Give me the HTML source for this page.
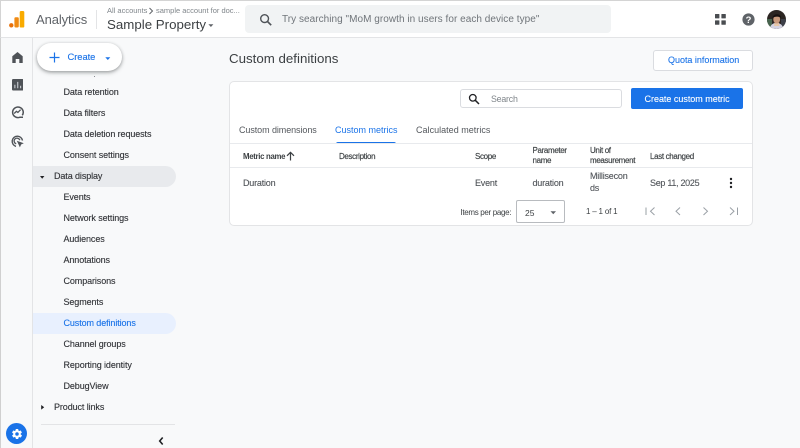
<!DOCTYPE html>
<html><head><meta charset="utf-8">
<style>
html,body{margin:0;padding:0;width:800px;height:448px;overflow:hidden;background:#f8f9fa;font-family:"Liberation Sans",sans-serif;}
.t{position:absolute;white-space:nowrap;line-height:12px;}
.b{position:absolute;box-sizing:border-box;}
.n{font-size:9px;color:#303236;left:63.5px;letter-spacing:-.1px;-webkit-text-stroke:.12px #303236;}
.h{font-size:8px;color:#3c4043;letter-spacing:-.35px;-webkit-text-stroke:.15px #3c4043;}
.r{font-size:9px;color:#4f5358;letter-spacing:-.2px;-webkit-text-stroke:.1px #4f5358;}
svg{position:absolute;}
</style></head><body>
<div class="b" style="left:0;top:0;width:800px;height:38px;background:#fff;border-bottom:1px solid #e3e4e6;border-top:1px solid #d4d4d4;border-left:1px solid #d4d4d4"></div>
<div class="b" style="left:0;top:38px;width:33px;height:410px;background:#f8f9fa;border-right:1px solid #e3e4e6;border-left:1px solid #d0d0d0"></div>

<!-- logo -->
<svg style="left:9px;top:10px" width="16" height="18" viewBox="0 0 16 18"><circle cx="2.300" cy="15.300" r="2.200" fill="#e8710a"/><rect x="5.400" y="7.200" width="4.400" height="10.300" rx="1.200" fill="#f08a12"/><rect x="10.700" y="1" width="4.600" height="16.500" rx="1.300" fill="#f9ab00"/></svg>
<div class="t" style="left:36px;top:12px;font-size:13px;line-height:15px;color:#5f6368;letter-spacing:-.1px">Analytics</div>
<div class="b" style="left:96px;top:10px;width:1px;height:19px;background:#e3e4e6"></div>
<div class="t" style="left:107px;top:5px;font-size:7.500px;line-height:11px;color:#80868b">All accounts</div>
<svg style="left:148px;top:7px" width="6" height="8" viewBox="0 0 6 8"><path d="M1.500 1l3 3-3 3" fill="none" stroke="#5f6368" stroke-width="1"/></svg>
<div class="t" style="left:156px;top:5px;font-size:7.500px;line-height:11px;color:#80868b">sample account for doc...</div>
<div class="t" style="left:107px;top:15.500px;font-size:13.300px;line-height:17px;color:#3c4043">Sample Property</div>
<svg style="left:207.500px;top:23.500px" width="6" height="4" viewBox="0 0 6 4"><path d="M.4 .3h5L2.900 3z" fill="#5f6368"/></svg>

<!-- search -->
<div class="b" style="left:245px;top:5px;width:366px;height:28px;background:#f1f3f4;border-radius:4px"></div>
<svg style="left:258.500px;top:13px" width="14" height="14" viewBox="0 0 14 14"><circle cx="5.600" cy="5.600" r="3.900" fill="none" stroke="#4f5358" stroke-width="1.400"/><path d="M8.500 8.500l3.700 3.700" stroke="#4f5358" stroke-width="1.600"/></svg>
<div class="t" style="left:282px;top:13.500px;font-size:10px;color:#70757a;letter-spacing:.04px">Try searching "MoM growth in users for each device type"</div>

<!-- top right -->
<svg style="left:715px;top:14px" width="11" height="11" viewBox="0 0 11 11"><g fill="#4a4d51"><rect width="4.400" height="4.400" rx=".4"/><rect x="6.400" width="4.400" height="4.400" rx=".4"/><rect y="6.400" width="4.400" height="4.400" rx=".4"/><rect x="6.400" y="6.400" width="4.400" height="4.400" rx=".4"/></g></svg>
<svg style="left:742px;top:13px" width="13" height="13" viewBox="0 0 13 13"><circle cx="6.500" cy="6.500" r="6.100" fill="#5f6368"/><text x="6.500" y="10" font-size="9.500" font-weight="bold" text-anchor="middle" fill="#fff" font-family="Liberation Sans">?</text></svg>
<svg style="left:767px;top:9.500px" width="19" height="19" viewBox="0 0 19 19"><defs><clipPath id="c"><circle cx="9.500" cy="9.500" r="9.500"/></clipPath></defs><g clip-path="url(#c)"><rect width="19" height="19" fill="#2b2522"/><rect x="0" y="9" width="5" height="10" fill="#47644e"/><rect x="14" y="9" width="5" height="10" fill="#3c3f48"/><path d="M3 19c.3-4.500 3-6 6.500-6s6.200 1.500 6.500 6z" fill="#d4d3e2"/><ellipse cx="9.700" cy="9.300" rx="3.400" ry="4.300" fill="#c99a7c"/><path d="M5.500 8.500C5 3.500 14 2.500 14 8c-1.500-1.700-6.500-2-8.500.5z" fill="#171110"/><path d="M7.500 12.800c1 1.300 3.400 1.300 4.400 0l.6 3.200H7z" fill="#e7c8a8"/></g></svg>

<!-- rail icons -->
<svg style="left:11.500px;top:51.500px" width="11" height="11" viewBox="0 0 11 11"><path d="M5.500 0L.3 4.200V11h3.400V7h3.600v4h3.400V4.200z" fill="#4f5358"/></svg>
<svg style="left:11.500px;top:79px" width="11.500" height="11.500" viewBox="0 0 12 12"><rect width="12" height="12" rx="1.200" fill="#4f5358"/><path d="M3 6v3.600M6 3v6.600M9 7v2.600" stroke="#cfd3d8" stroke-width="1.100"/></svg>
<svg style="left:10.500px;top:106px" width="13" height="13" viewBox="0 0 13 13"><path d="M11.300 9.300A5.300 5.300 0 1 0 8.700 11.300H12" fill="none" stroke="#4f5358" stroke-width="1.500"/><path d="M3.200 7.500l2.200-2.200 1.500 1.100 2.700-2.700" fill="none" stroke="#4f5358" stroke-width="1.300"/></svg>
<svg style="left:10.500px;top:134.500px" width="13" height="13" viewBox="0 0 13 13"><path d="M5 11.400A5.200 5.200 0 1 1 11.500 5.500" fill="none" stroke="#4f5358" stroke-width="1.400"/><path d="M5.200 8.800A2.900 2.900 0 1 1 8.800 5.200" fill="none" stroke="#4f5358" stroke-width="1.300"/><path d="M5.800 5.800l7 2.500-2.700 1.200-1.200 2.900z" fill="#4f5358"/></svg>

<!-- nav highlights -->
<div class="b" style="left:33px;top:166px;width:143px;height:21px;background:#e8eaed;border-radius:0 11px 11px 0"></div>
<div class="b" style="left:33px;top:312.500px;width:143px;height:21px;background:#e8f0fe;border-radius:0 11px 11px 0"></div>

<!-- nav -->
<div class="b" style="left:93.500px;top:75.500px;width:1px;height:1px;background:#8a8d91"></div>
<div class="t n" style="top:86px">Data retention</div>
<div class="t n" style="top:107px">Data filters</div>
<div class="t n" style="top:128px">Data deletion requests</div>
<div class="t n" style="top:149px">Consent settings</div>
<svg style="left:40px;top:175.500px" width="5" height="3" viewBox="0 0 5 3"><path d="M0 0h4.400L2.200 2.700z" fill="#202124"/></svg>
<div class="t n" style="top:170px;left:54px">Data display</div>
<div class="t n" style="top:191px">Events</div>
<div class="t n" style="top:212px">Network settings</div>
<div class="t n" style="top:233px">Audiences</div>
<div class="t n" style="top:254px">Annotations</div>
<div class="t n" style="top:275px">Comparisons</div>
<div class="t n" style="top:296px">Segments</div>
<div class="t n" style="top:317px;color:#1a73e8;-webkit-text-stroke:.12px #1a73e8">Custom definitions</div>
<div class="t n" style="top:338px">Channel groups</div>
<div class="t n" style="top:359px">Reporting identity</div>
<div class="t n" style="top:380px">DebugView</div>
<svg style="left:40.500px;top:404.500px" width="4" height="5" viewBox="0 0 4 5"><path d="M.2 0v4.600L3.200 2.300z" fill="#202124"/></svg>
<div class="t n" style="top:401px;left:54px">Product links</div>
<div class="b" style="left:41px;top:424px;width:134px;height:1px;background:#e3e4e6"></div>
<svg style="left:158px;top:436px" width="7" height="10" viewBox="0 0 7 10"><path d="M4.700 1.500L1.700 5l3 3.500" fill="none" stroke="#202124" stroke-width="1.600"/></svg>

<!-- settings -->
<div class="b" style="left:6px;top:423px;width:21px;height:21px;border-radius:50%;background:#1a73e8"></div>
<svg style="left:10.500px;top:427.500px" width="12" height="12" viewBox="0 0 24 24"><path fill="#fff" fill-rule="evenodd" d="M19.400 13c.1-.3.1-.7.1-1s0-.7-.1-1l2.100-1.600c.2-.2.2-.4.1-.6l-2-3.500c-.1-.2-.4-.3-.6-.2l-2.500 1c-.5-.4-1.100-.7-1.700-1L14.400 2.400C14.400 2.200 14.200 2 14 2h-4c-.2 0-.4.200-.5.400L9.100 5.100c-.6.300-1.200.6-1.700 1l-2.500-1c-.2-.1-.5 0-.6.200l-2 3.500c-.1.200-.1.400.1.600L4.600 11c0 .3-.1.700-.1 1s0 .7.100 1l-2.100 1.600c-.2.200-.2.400-.1.600l2 3.500c.1.200.4.300.6.200l2.500-1c.5.400 1.100.7 1.700 1l.4 2.700c0 .2.200.4.500.4h4c.2 0 .4-.2.500-.4l.4-2.700c.6-.3 1.200-.6 1.700-1l2.500 1c.2.100.5 0 .6-.2l2-3.500c.1-.2.1-.4-.1-.6zM12 15.500a3.500 3.500 0 1 1 0-7 3.500 3.500 0 0 1 0 7z"/></svg>

<!-- create button -->
<div class="b" style="left:37px;top:42.500px;width:85px;height:28px;background:#fff;border-radius:14px;box-shadow:0 1px 3px rgba(60,64,67,.4),0 2px 5px rgba(60,64,67,.2)"></div>
<svg style="left:48.500px;top:52px" width="11" height="11" viewBox="0 0 11 11"><path d="M5.500 .5v10M.5 5.500h10" stroke="#1a73e8" stroke-width="1.200"/></svg>
<div class="t" style="left:67.500px;top:50.500px;font-size:9.400px;color:#1a73e8;-webkit-text-stroke:.12px #1a73e8;letter-spacing:-.05px">Create</div>
<svg style="left:105px;top:56.500px" width="6" height="4" viewBox="0 0 6 4"><path d="M.3 .2h5L2.800 3z" fill="#1a73e8"/></svg>

<!-- main -->
<div class="t" style="left:229px;top:50.500px;font-size:13.300px;line-height:16px;color:#3c4043">Custom definitions</div>
<div class="b" style="left:653px;top:49.500px;width:100px;height:21px;background:#fff;border:1px solid #dadce0;border-radius:3px"></div>
<div class="t" style="left:668px;top:54px;font-size:9px;color:#1a73e8;letter-spacing:-.02px;-webkit-text-stroke:.1px #1a73e8">Quota information</div>

<div class="b" style="left:229px;top:81px;width:524px;height:145px;background:#fff;border:1px solid #e3e4e6;border-radius:5px"></div>

<!-- search box -->
<div class="b" style="left:460px;top:89px;width:162px;height:19px;background:#fff;border:1px solid #dadce0;border-radius:3px"></div>
<svg style="left:468px;top:92.500px" width="12" height="12" viewBox="0 0 12 12"><circle cx="4.800" cy="4.800" r="3.300" fill="none" stroke="#202124" stroke-width="1.300"/><path d="M7.300 7.300l3.700 3.700" stroke="#202124" stroke-width="1.500"/></svg>
<div class="t" style="left:491px;top:92.500px;font-size:8.800px;color:#80868b;letter-spacing:-.2px">Search</div>
<div class="b" style="left:631px;top:88px;width:112px;height:21px;background:#1a73e8;border-radius:2px"></div>
<div class="t" style="left:644.500px;top:92.500px;font-size:9px;color:#fff;letter-spacing:-.02px;-webkit-text-stroke:.1px #fff">Create custom metric</div>

<!-- tabs -->
<div class="t" style="left:239px;top:124px;font-size:9px;color:#54585d;letter-spacing:-.08px">Custom dimensions</div>
<div class="t" style="left:335px;top:124px;font-size:9px;color:#1a73e8;letter-spacing:0">Custom metrics</div>
<div class="t" style="left:416px;top:124px;font-size:9px;color:#54585d;letter-spacing:.02px">Calculated metrics</div>
<div class="b" style="left:336px;top:142px;width:60px;height:2px;background:#1a73e8;border-radius:2px 2px 0 0"></div>
<div class="b" style="left:230px;top:143px;width:522px;height:1px;background:#e8eaed"></div>

<!-- table head -->
<div class="t h" style="left:243px;top:150.500px;font-weight:bold;font-size:7.800px;letter-spacing:-.3px;-webkit-text-stroke:0">Metric name</div>
<svg style="left:285.500px;top:151px" width="9" height="10" viewBox="0 0 9 10"><path d="M4.500 9.500V1.500M1 4.800l3.500-3.500 3.500 3.500" fill="none" stroke="#3c4043" stroke-width="1.200"/></svg>
<div class="t h" style="left:339px;top:150.500px">Description</div>
<div class="t h" style="left:475px;top:150.500px">Scope</div>
<div class="t h" style="left:532.500px;top:146px;line-height:9.500px">Parameter<br>name</div>
<div class="t h" style="left:590px;top:146px;line-height:9.500px">Unit of<br>measurement</div>
<div class="t h" style="left:650px;top:150.500px">Last changed</div>
<div class="b" style="left:230px;top:167px;width:522px;height:1px;background:#e8eaed"></div>

<!-- row -->
<div class="t r" style="left:243px;top:177px">Duration</div>
<div class="t r" style="left:475px;top:177px">Event</div>
<div class="t r" style="left:532.500px;top:177px">duration</div>
<div class="t r" style="left:590px;top:171px;line-height:11.500px">Millisecon<br>ds</div>
<div class="t r" style="left:650px;top:177px;letter-spacing:-.3px">Sep 11, 2025</div>
<svg style="left:729px;top:177px" width="4" height="12" viewBox="0 0 4 12"><circle cx="2" cy="2" r="1.200" fill="#202124"/><circle cx="2" cy="6" r="1.200" fill="#202124"/><circle cx="2" cy="10" r="1.200" fill="#202124"/></svg>

<!-- pagination -->
<div class="t" style="left:460.500px;top:206.500px;font-size:8px;color:#3c4043;letter-spacing:-.33px">Items per page:</div>
<div class="b" style="left:516px;top:200px;width:49px;height:23px;background:#fff;border:1px solid #b8bbbf;border-radius:2px"></div>
<div class="t" style="left:525px;top:206.500px;font-size:8.500px;color:#3c4043">25</div>
<svg style="left:549.500px;top:211px" width="7" height="4" viewBox="0 0 7 4"><path d="M.5 .3h5.500L3.250 3.300z" fill="#5f6368"/></svg>
<div class="t" style="left:586px;top:205.500px;font-size:8px;color:#3c4043;letter-spacing:-.2px">1 – 1 of 1</div>
<svg style="left:645px;top:206px" width="96" height="11" viewBox="0 0 96 11" fill="none" stroke="#9aa0a6" stroke-width="1"><path d="M1 1.500v7.500M9.500 1.500L5.500 5.250l4 3.750"/><path d="M35 1.500L31 5.250l4 3.750"/><path d="M58.500 1.500l4 3.750-4 3.750"/><path d="M85 1.500l4 3.750-4 3.750M92.500 1.500v7.500"/></svg>
</body></html>
